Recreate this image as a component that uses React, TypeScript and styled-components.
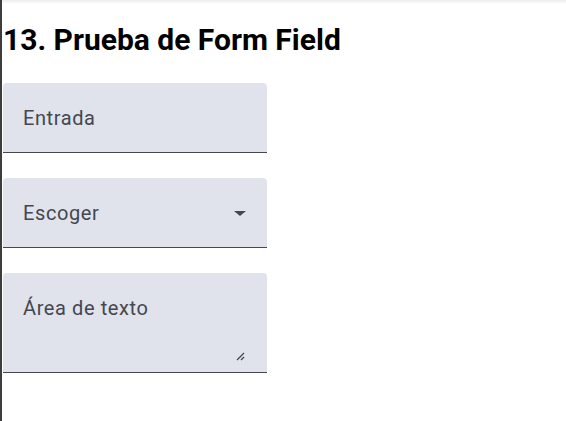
import React from "react";
import styled, { createGlobalStyle } from "styled-components";

const Global = createGlobalStyle`
  html, body { margin: 0; padding: 0; background: #ffffff; }
  body { font-family: Roboto, "Noto Sans", sans-serif; }
`;

const Page = styled.div`
  box-sizing: border-box;
  min-height: 100vh;
  border-left: 2px solid #3d3d3d;
  background: linear-gradient(to bottom, #ececec 0px, #f6f6f6 2px, #ffffff 4px);
  padding: 22px 0 0 1px;
`;

const Title = styled.h2`
  margin: 0 0 25px 0;
  font-family: Roboto, sans-serif;
  font-weight: 700;
  font-size: 30px;
  line-height: 36px;
  color: #000;
`;

const Fields = styled.div`
  display: flex;
  flex-direction: column;
  gap: 25px;
  width: 264px;
`;

const Field = styled.div<{ $tall?: boolean }>`
  position: relative;
  box-sizing: border-box;
  height: ${(p) => (p.$tall ? 100 : 70)}px;
  background: #e0e2ec;
  border-radius: 4px 4px 0 0;
  border-bottom: 1px solid #44474e;
  display: flex;
  align-items: ${(p) => (p.$tall ? "flex-start" : "center")};
  justify-content: space-between;
  padding: ${(p) => (p.$tall ? "23px 20px 0 20px" : "0 20px")};
`;

const Label = styled.span`
  font-family: Roboto, sans-serif;
  font-size: 20px;
  letter-spacing: 0.6px;
  color: #44474e;
  line-height: 24px;
`;

const Arrow = styled.span`
  width: 0;
  height: 0;
  border-left: 6px solid transparent;
  border-right: 6px solid transparent;
  border-top: 5px solid #44474e;
  margin-right: 1px;
  margin-top: 1px;
`;

const Grip = styled.svg`
  position: absolute;
  right: 22px;
  bottom: 11px;
`;

export default function App() {
  return (
    <>
      <Global />
      <Page>
        <Title>13. Prueba de Form Field</Title>
        <Fields>
          <Field>
            <Label>Entrada</Label>
          </Field>
          <Field>
            <Label>Escoger</Label>
            <Arrow />
          </Field>
          <Field $tall>
            <Label>Área de texto</Label>
            <Grip width="9" height="9" viewBox="0 0 9 9">
              <path d="M8 1 L1 8 M8 5 L5 8" stroke="#44474e" strokeWidth="1.3" fill="none" />
            </Grip>
          </Field>
        </Fields>
      </Page>
    </>
  );
}
